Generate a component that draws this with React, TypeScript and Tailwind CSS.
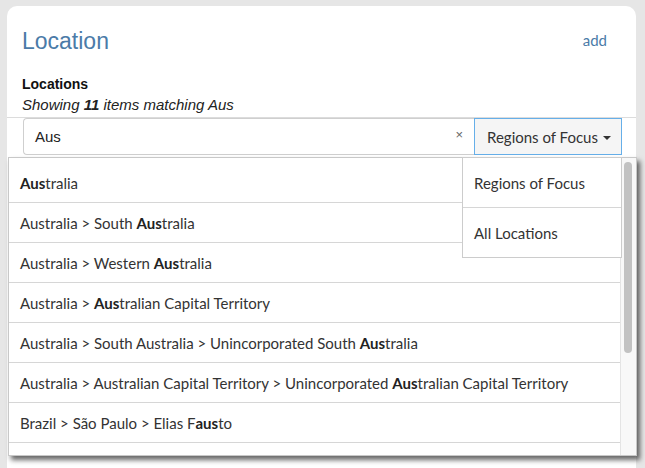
import React from 'react';

type Part = { t: string; b?: boolean };

const rows: Part[][] = [
  [{ t: 'Aus', b: true }, { t: 'tralia' }],
  [{ t: 'Australia > South ' }, { t: 'Aus', b: true }, { t: 'tralia' }],
  [{ t: 'Australia > Western ' }, { t: 'Aus', b: true }, { t: 'tralia' }],
  [{ t: 'Australia > ' }, { t: 'Aus', b: true }, { t: 'tralian Capital Territory' }],
  [{ t: 'Australia > South Australia > Unincorporated South ' }, { t: 'Aus', b: true }, { t: 'tralia' }],
  [
    { t: 'Australia > Australian Capital Territory > Unincorporated ' },
    { t: 'Aus', b: true },
    { t: 'tralian Capital Territory' },
  ],
  [{ t: 'Brazil > São Paulo > Elias F' }, { t: 'aus', b: true }, { t: 'to' }],
  [{ t: '' }],
];

const sans = "font-['Liberation_Sans',Arial,sans-serif]";
const lato = "font-['Lato','Open_Sans',sans-serif]";

export default function App() {
  return (
    <div className="h-[468px] w-[645px] overflow-hidden bg-[#e6e6e6] pl-[7px] pt-[6px]">
      <div className="relative h-[480px] w-[629px] rounded-[10px] bg-white pt-[21px]">
        {/* header */}
        <div className="flex h-[28px] items-center justify-between pl-[15px] pr-[29px]">
          <h1 className={`${sans} text-[23px] leading-[28px] text-[#4b7ba8]`}>Location</h1>
          <a className={`${lato} mt-[-2px] text-[15px] text-[#4b7ba8]`}>add</a>
        </div>

        <div className="mt-[19px] border-b border-[#dcdcdc] pb-[2px] pl-[15px]">
          <div className={`${sans} h-[20px] text-[14px] font-bold leading-[20px] text-[#111]`}>Locations</div>
          <div className={`${sans} mt-[1px] h-[20px] text-[15px] italic leading-[20px] text-[#222]`}>
            Showing <b>11</b> items matching Aus
          </div>
        </div>

        {/* search group */}
        <div className="ml-[16px] flex h-[37px] w-[599px]">
          <div className="relative flex flex-1 items-center rounded-l-[4px] border border-r-0 border-[#cfcfcf] pl-[11px] pt-[2px]">
            <span className={`${sans} text-[15px] text-[#222]`}>Aus</span>
            <span className={`${sans} absolute right-[11px] top-[6px] text-[13px] text-[#666]`}>×</span>
          </div>
          <button className={`${lato} flex w-[148px] items-center gap-[5px] border border-[#66afe9] bg-[#f5f5f5] pl-[12px] pt-[1px] text-[15px] text-[#333]`}>
            Regions of Focus
            <span className="mt-[1px] h-0 w-0 border-x-[4px] border-t-[4px] border-x-transparent border-t-[#333]" />
          </button>
        </div>

        {/* results dropdown */}
        <div className="absolute left-[1px] top-[151px] flex h-[299px] w-[629px] border border-[#c8c8c8] bg-white shadow-[3px_4px_5px_rgba(0,0,0,0.6)]">
          <div className="flex-1 pt-[5px]">
            {rows.map((r, i) => (
              <div
                key={i}
                className={`${lato} flex h-[40px] items-center border-b border-[#d6d6d6] pl-[11px] pt-[2px] text-[15px] text-[#333]`}
              >
                {r.map((p, j) =>
                  p.b ? (
                    <b key={j} className="font-bold text-[#222]">
                      {p.t}
                    </b>
                  ) : (
                    <span key={j} className="whitespace-pre">{p.t}</span>
                  )
                )}
              </div>
            ))}
          </div>
          <div className="w-[16px] border-l border-[#e4e4e4] bg-[#f8f8f8] pl-[3px] pt-[4px]">
            <div className="h-[191px] w-[8px] rounded-full bg-[#c2c2c2]" />
          </div>

          {/* region menu */}
          <div className="absolute left-[453px] top-[-1px] w-[160px] border border-[#cccccc] bg-white">
            <div className={`${lato} flex h-[50px] items-center border-b border-[#d6d6d6] pl-[11px] pt-[2px] text-[15px] text-[#333]`}>
              Regions of Focus
            </div>
            <div className={`${lato} flex h-[49px] items-center pl-[11px] pt-[2px] text-[15px] text-[#333]`}>
              All Locations
            </div>
          </div>
        </div>
      </div>
    </div>
  );
}
